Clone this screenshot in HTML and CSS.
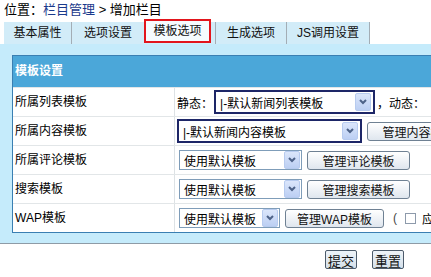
FILE: index.html
```html
<!DOCTYPE html>
<html lang="zh-CN">
<head>
    <meta charset="UTF-8">
    <title>增加栏目</title>
    <link rel="stylesheet" href="styles.css">
</head>
<body>
    <div class="crumb">位置：<a class="link">栏目管理</a> &gt; 增加栏目</div>
    <div class="tabs">
        <div class="tab t1">基本属性</div>
        <div class="tab t2">选项设置</div>
        <div class="tab active">模板选项</div>
        <div class="tab t4">生成选项</div>
        <div class="tab t5">JS调用设置</div>
    </div>
    <div class="panel">
        <div class="sheet">
            <div class="sheet-head">模板设置</div>
            <div class="row">
                <div class="label">所属列表模板</div>
                <div class="field">
                    静态：<span class="select focus w-list"><span class="text">|-默认新闻列表模板</span><span class="arrow"><svg width="10" height="8" viewBox="0 0 10 8"><path d="M2 2 L5 5 L8 2" fill="none" stroke="#4d6288" stroke-width="2"/></svg></span></span>
                    <span class="sep">，动态：</span><span class="select w-dyn"><span class="text"></span></span>
                </div>
            </div>
            <div class="row">
                <div class="label">所属内容模板</div>
                <div class="field">
                    <span class="select focus w-content"><span class="text">|-默认新闻内容模板</span><span class="arrow"><svg width="10" height="8" viewBox="0 0 10 8"><path d="M2 2 L5 5 L8 2" fill="none" stroke="#4d6288" stroke-width="2"/></svg></span></span>
                    <button class="btn">管理内容模板</button>
                </div>
            </div>
            <div class="row">
                <div class="label">所属评论模板</div>
                <div class="field">
                    <span class="select w-def"><span class="text">使用默认模板</span><span class="arrow"><svg width="10" height="8" viewBox="0 0 10 8"><path d="M2 2 L5 5 L8 2" fill="none" stroke="#4d6288" stroke-width="2"/></svg></span></span>
                    <button class="btn">管理评论模板</button>
                </div>
            </div>
            <div class="row">
                <div class="label">搜索模板</div>
                <div class="field">
                    <span class="select w-def"><span class="text">使用默认模板</span><span class="arrow"><svg width="10" height="8" viewBox="0 0 10 8"><path d="M2 2 L5 5 L8 2" fill="none" stroke="#4d6288" stroke-width="2"/></svg></span></span>
                    <button class="btn">管理搜索模板</button>
                </div>
            </div>
            <div class="row">
                <div class="label">WAP模板</div>
                <div class="field">
                    <span class="select w-wap"><span class="text">使用默认模板</span><span class="arrow"><svg width="10" height="8" viewBox="0 0 10 8"><path d="M2 2 L5 5 L8 2" fill="none" stroke="#4d6288" stroke-width="2"/></svg></span></span>
                    <button class="btn btn-wap">管理WAP模板</button>
                    <span class="paren">(</span><span class="check"></span><span class="tail">应用到子栏目</span>
                </div>
            </div>
        </div>
    </div>
    <div class="actions">
        <button class="submit">提交</button>
        <button class="submit">重置</button>
    </div>
</body>
</html>
```

FILE: styles.css
```css
html, body {
    overflow: hidden;
}
body {
    margin: 0;
    width: 760px;
    font-family: 'Liberation Sans', 'Noto Sans CJK SC', sans-serif;
    font-size: 12px;
    color: #000;
    background-color: #fff;
}
.crumb {
    height: 22px;
    line-height: 20px;
    padding-left: 4px;
    font-size: 13px;
}
.link {
    color: #1a3a8c;
}
.tabs {
    display: flex;
    margin-left: 4px;
    width: 366px;
    height: 22px;
    background-color: #d2ecf8;
}
.tab {
    box-sizing: border-box;
    height: 22px;
    line-height: 22px;
    text-align: center;
    color: #111;
}
.t1 { width: 68px; border-right: 1px solid #a3adb5; }
.t2 { width: 72px; }
.active {
    width: 67px;
    height: 24px;
    margin-top: -3px;
    line-height: 20px;
    border: 2px solid #e2151c;
    background-color: #f5fbfe;
}
.t4 {
    width: 72px;
    margin-left: 4px;
    border-left: 1px solid #a3adb5;
    border-right: 1px solid #a3adb5;
}
.t5 { width: 83px; border-right: 1px solid #a3adb5; }
.panel {
    padding: 11px 0 10px 12px;
    background-color: #c5ebfb;
    border-bottom: 1px solid #8e9ba6;
}
.sheet {
    border: 1px solid #3a7fb2;
    background-color: #fff;
}
.sheet-head {
    height: 31px;
    line-height: 31px;
    padding-left: 2px;
    background-color: #4ba7d9;
    color: #fff;
    font-weight: bold;
}
.row {
    display: flex;
    height: 28px;
    border-top: 1px solid #e2e6e8;
}
.label {
    width: 159px;
    padding-left: 2px;
    line-height: 28px;
    border-right: 1px solid #dde2e5;
}
.field {
    display: flex;
    align-items: center;
    padding-left: 2px;
    white-space: nowrap;
}
.select {
    box-sizing: border-box;
    display: inline-flex;
    align-items: center;
    height: 20px;
    border: 1px solid #7f9db9;
    background-color: #fff;
}
.select .text {
    flex: 1;
    padding-left: 4px;
}
.arrow {
    display: flex;
    align-items: center;
    justify-content: center;
    width: 14px;
    height: 16px;
    margin-right: 1px;
    border: 1px solid #b7cbef;
    border-radius: 2px;
    background: linear-gradient(#dbe6fb, #bccff3);
}
.focus {
    height: 24px;
    border: 2px solid #1d2667;
}
.focus .arrow {
    margin-right: 2px;
}
.w-list { width: 161px; margin-left: 1px; }
.w-dyn { width: 80px; }
.w-content { width: 185px; margin-left: 0; }
.w-def { width: 123px; margin-left: 2px; }
.w-wap { width: 101px; margin-left: 2px; }
.sep {
    margin-left: 2px;
    margin-right: 12px;
}
.btn {
    height: 19px;
    padding: 0;
    margin-left: 8px;
    width: 103px;
    font-family: inherit;
    font-size: 12px;
    color: #111;
    border: 1px solid #6f8193;
    border-radius: 3px;
    background: linear-gradient(#ffffff, #dfe6ee);
}
.field .btn:first-of-type { margin-left: 5px; }
.btn-wap { width: 99px; margin-left: 4px; }
.paren {
    margin-left: 9px;
    color: #444;
}
.check {
    box-sizing: border-box;
    width: 11px;
    height: 11px;
    margin-left: 8px;
    border: 1px solid #8d9aab;
    background-color: #fff;
}
.tail {
    margin-left: 6px;
}
.actions {
    display: flex;
    gap: 15px;
    padding: 6px 0 0 325px;
}
.submit {
    box-sizing: border-box;
    width: 32px;
    height: 19px;
    padding: 0;
    font-family: inherit;
    font-size: 13px;
    color: #111;
    border: 1px solid #4c5b6b;
    border-radius: 2px;
    background: linear-gradient(#eef3f8, #d5e0ea);
}
```
